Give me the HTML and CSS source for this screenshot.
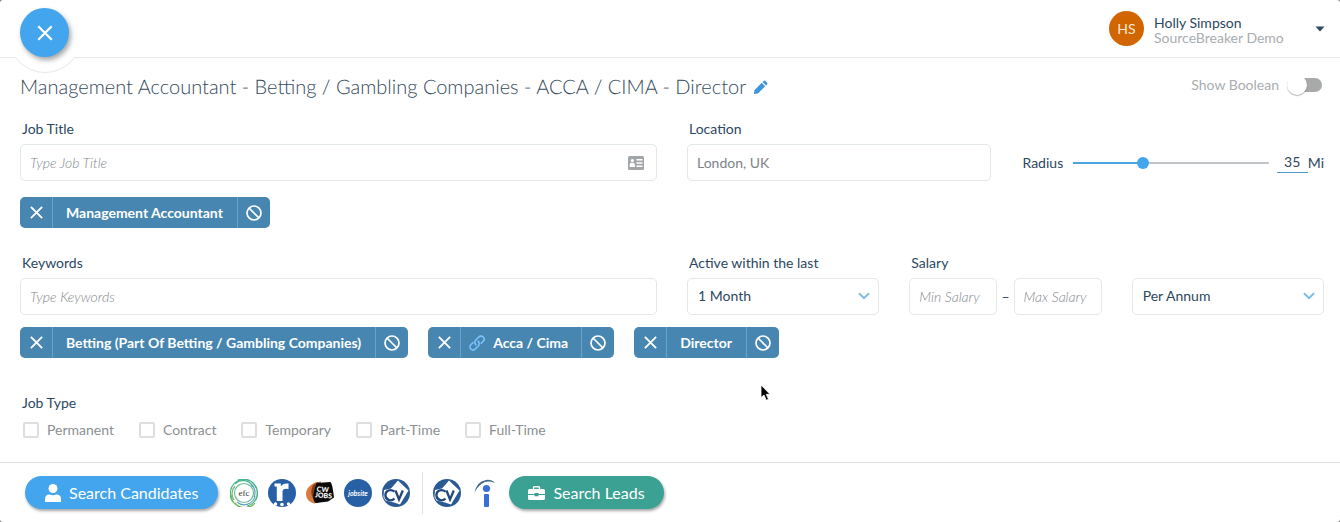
FILE: index.html
```
<!DOCTYPE html>
<html lang="en">
<head>
<meta charset="utf-8">
<title>SourceBreaker search</title>
<link rel="stylesheet" href="styles.css">
</head>
<body>
<svg class="defs" aria-hidden="true">
  <symbol id="x" viewBox="0 0 16 16"><path d="M2 2 14 14M14 2 2 14" fill="none" stroke="currentColor" stroke-width="2"/></symbol>
  <symbol id="ban" viewBox="0 0 16 16"><circle cx="8" cy="8" r="7" fill="none" stroke="currentColor" stroke-width="1.7"/><path d="M3 3 13 13" stroke="currentColor" stroke-width="1.7"/></symbol>
  <symbol id="cv" viewBox="0 0 28 28">
    <circle cx="14" cy="14" r="14" fill="#2a5a94"/>
    <path d="M16 1.500 26.500 11.500 18 25.500 12 23.500 3.500 21.500 1.500 18 2 11 9 9.500Z" fill="#fff"/>
    <path d="M12.500 12.600C8.500 9.400 3.200 11.600 3.400 16.400C3.600 21 8.800 22.800 12.500 19.700M13.500 11.500 17 20.500 20.800 11.500" fill="none" stroke="#23487c" stroke-width="2.300"/>
  </symbol>
</svg>
<div class="app">
  <header class="header">
    <span class="notch"></span>
    <button class="close" aria-label="Close"><svg class="close-icon"><use href="#x"/></svg></button>
    <button class="account">
      <span class="avatar">HS</span>
      <span class="who"><span>Holly Simpson</span><span class="org">SourceBreaker Demo</span></span>
      <svg class="caret" viewBox="0 0 10 6"><path d="M.5.5h9L5 5.500Z" fill="currentColor"/></svg>
    </button>
  </header>

  <main class="main">
    <div class="title-row">
      <h1 class="title">Management Accountant - Betting / Gambling Companies - ACCA / CIMA - Director</h1>
      <button class="plain" aria-label="Edit title"><svg class="pencil" viewBox="0 0 16 16"><path d="M1 15 1.500 10.800 9.300 3 13 6.700 5.200 14.500ZM10.200 2.100 11.600.8Q12.300.3 13 .9L15.100 3Q15.700 3.700 15.200 4.400L13.900 5.800Z" fill="#3f97da"/></svg></button>
      <label class="boolean">Show Boolean <input class="switch" type="checkbox" role="switch"></label>
    </div>

    <div class="columns">
      <section class="field">
        <label class="label" for="job">Job Title</label>
        <div class="with-icon">
          <input class="box" id="job" placeholder="Type Job Title">
          <svg class="card-icon" viewBox="0 0 16 14"><rect width="16" height="14" rx="1.500" fill="#a3a6a8"/><circle cx="4.300" cy="4.500" r="1.600" fill="#fff"/><path d="M1.700 11V8.800Q1.700 7.200 3.300 6.800H5.300Q6.900 7.200 6.900 8.800V11ZM8.500 3H14.500V4.500H8.500ZM8.500 6.200H14.500V7.700H8.500ZM8.500 9.400H14.500V11H8.500Z" fill="#fff"/></svg>
        </div>
      </section>
      <div class="halves">
        <section class="field">
          <label class="label" for="loc">Location</label>
          <input class="box" id="loc" value="London, UK">
        </section>
        <div class="radius">
          <label for="radius">Radius</label>
          <input class="range" id="radius" type="range" min="0" max="100" value="35">
          <span class="miles"><input class="num" aria-label="Radius in miles" value="35"><span>Mi</span></span>
        </div>
      </div>
    </div>

    <div class="chips chips-job">
      <div class="chip"><button class="chip-btn" aria-label="Remove"><svg class="chip-x"><use href="#x"/></svg></button><span class="chip-text">Management Accountant</span><button class="chip-btn" aria-label="Exclude"><svg class="chip-ban"><use href="#ban"/></svg></button></div>
    </div>

    <div class="columns">
      <section class="field">
        <label class="label" for="kw">Keywords</label>
        <input class="box" id="kw" placeholder="Type Keywords">
      </section>
      <div class="thirds">
        <section class="field">
          <label class="label" for="active">Active within the last</label>
          <div class="drop"><select class="box select" id="active"><option>1 Month</option></select><svg class="chevron" viewBox="0 0 12 8"><path d="M1 1.200 6 6.200 11 1.200" fill="none" stroke="#7dbbe8" stroke-width="2"/></svg></div>
        </section>
        <section class="field">
          <label class="label" for="min">Salary</label>
          <div class="salary"><input class="box" id="min" placeholder="Min Salary"><span>–</span><input class="box" aria-label="Maximum salary" placeholder="Max Salary"></div>
        </section>
        <section class="field">
          <div class="drop"><select class="box select" aria-label="Salary period"><option>Per Annum</option></select><svg class="chevron" viewBox="0 0 12 8"><path d="M1 1.200 6 6.200 11 1.200" fill="none" stroke="#7dbbe8" stroke-width="2"/></svg></div>
        </section>
      </div>
    </div>

    <div class="chips chips-kw">
      <div class="chip"><button class="chip-btn" aria-label="Remove"><svg class="chip-x"><use href="#x"/></svg></button><span class="chip-text">Betting (Part Of Betting / Gambling Companies)</span><button class="chip-btn" aria-label="Exclude"><svg class="chip-ban"><use href="#ban"/></svg></button></div>
      <div class="chip"><button class="chip-btn" aria-label="Remove"><svg class="chip-x"><use href="#x"/></svg></button><span class="chip-text linked"><svg class="link" viewBox="0 0 16 16"><g fill="none" stroke="#7cc4fb" stroke-width="1.600" stroke-linecap="round"><path d="M6.800 9.600C5.400 8.200 5.500 6.300 6.800 5L9.500 2.200C10.900.8 13 .8 14.200 2C15.400 3.200 15.300 5.200 14 6.500L12.200 8.300"/><path d="M9.200 6.400C10.600 7.800 10.500 9.700 9.200 11L6.500 13.800C5.100 15.200 3 15.200 1.800 14C.6 12.800.7 10.800 2 9.500L3.800 7.700"/></g></svg>Acca / Cima</span><button class="chip-btn" aria-label="Exclude"><svg class="chip-ban"><use href="#ban"/></svg></button></div>
      <div class="chip"><button class="chip-btn" aria-label="Remove"><svg class="chip-x"><use href="#x"/></svg></button><span class="chip-text">Director</span><button class="chip-btn" aria-label="Exclude"><svg class="chip-ban"><use href="#ban"/></svg></button></div>
    </div>

    <fieldset class="types">
      <legend class="label">Job Type</legend>
      <div class="checks">
        <label class="check"><input type="checkbox" class="tick">Permanent</label>
        <label class="check"><input type="checkbox" class="tick">Contract</label>
        <label class="check"><input type="checkbox" class="tick">Temporary</label>
        <label class="check"><input type="checkbox" class="tick">Part-Time</label>
        <label class="check"><input type="checkbox" class="tick">Full-Time</label>
      </div>
    </fieldset>
  </main>

  <footer class="footer">
    <button class="pill blue"><svg class="person" viewBox="0 0 16 18"><circle cx="8" cy="4.500" r="4.500" fill="#fff"/><path d="M0 18V15Q0 10.500 4.500 10.500Q8 11.800 11.500 10.500Q16 10.500 16 15V18Z" fill="#fff"/></svg>Search Candidates</button>
    <div class="logos">
      <svg class="logo" viewBox="0 0 28 28">
        <g fill="none" stroke-width="1.200">
          <path d="M2 20A13.300 13.300 0 0 1 20 2M3 23A13 13 0 0 1 2 8M8 1A13.500 13.500 0 0 1 26 9" stroke="#4ab59a"/>
          <path d="M24 5A13.400 13.400 0 0 1 25 22M27 12A13 13 0 0 1 17 27M5 5A11 11 0 0 1 23 8" stroke="#49b58b"/>
          <path d="M25 24A13 13 0 0 1 5 24M20 27A13 13 0 0 1 1 16M4 21A11.500 11.500 0 0 1 5 7" stroke="#77b95c"/>
          <path d="M7 23A11 11 0 0 0 25 17M21 5A11 11 0 0 1 24 18" stroke="#609dbd"/>
          <circle cx="14" cy="14" r="9.500" stroke="#70bd9b"/>
        </g>
        <text x="14" y="17" text-anchor="middle" class="efc">efc</text>
      </svg>
      <svg class="logo" viewBox="0 0 28 28"><circle cx="14" cy="14" r="14" fill="#2860a5"/><path d="M6.500 4.500H12.800V7.300Q15 3.800 20.500 4.500V10Q14.500 8.800 14.500 13V22H8.800V7.500H6.500Z" fill="#fff"/><circle cx="7.500" cy="25" r="1.700" fill="#fff"/><circle cx="14" cy="25.500" r="1.800" fill="#fff"/><circle cx="20.500" cy="25" r="1.700" fill="#fff"/></svg>
      <svg class="logo" viewBox="0 0 28 28"><path d="M9 3.500 15 2.500 14 23 8 24.500Q0 22 0 15T9 3.500Z" fill="#d77a3d"/><path d="M7 6 12 3 12 24 8 21Q3 14 7 6Z" fill="#843c18"/><path d="M10.500 4 24.500 3Q26.500 5 28 18.500L22 22.500 10 24Q6 22 8 12Z" fill="#090909"/><text class="cw" transform="rotate(4 18 14)"><tspan x="10.500" y="13">CW</tspan><tspan x="9" y="19">JOBS</tspan></text></svg>
      <svg class="logo" viewBox="0 0 28 28"><circle cx="14" cy="14" r="14" fill="#2860a5"/><text x="14" y="17" text-anchor="middle" class="jobsite">jobsite</text></svg>
      <svg class="logo"><use href="#cv"/></svg>
    </div>
    <div class="logos leads">
      <svg class="logo"><use href="#cv"/></svg>
      <svg class="logo" viewBox="0 0 28 28"><path d="M3.500 14Q5 3 15 1Q20.500.2 24 4Q16 .8 11 4.500Q6 8 3.500 14Z" fill="#416989"/><circle cx="15.500" cy="9.500" r="3.600" fill="#386fd5"/><rect x="13" y="15" width="5" height="13" rx="1" fill="#386fd5"/></svg>
    </div>
    <button class="pill green"><svg class="case" viewBox="0 0 17 14"><path d="M5.500 3V1.500Q5.500.7 6.300.7H10.700Q11.500.7 11.500 1.500V3" fill="none" stroke="#fff" stroke-width="1.400"/><path d="M1.500 3H15.500Q17 3 17 4.500V8H10.500V7H6.500V8H0V4.500Q0 3 1.500 3ZM0 9H6.500V10.200H10.500V9H17V12.500Q17 14 15.500 14H1.500Q0 14 0 12.500Z" fill="#fff"/></svg>Search Leads</button>
  </footer>
  <svg class="cursor" viewBox="0 0 12 18"><path d="M1 1V13.500L4 11 6.300 16.300 8.500 15.300 6.300 10.300H10Z" fill="#000" stroke="#fff" stroke-width=".8"/></svg>
</div>
</body>
</html>
```
FILE: styles.css
```
* { box-sizing: border-box; }
html { background: #777; }
body { margin: 0; font: 14px/20px Lato, "Open Sans", sans-serif; color: #2b4860; }
button, input, select { font: inherit; color: inherit; }
button { padding: 0; border: 0; background: none; cursor: pointer; }
svg { display: block; flex: none; }
.defs { position: absolute; width: 0; height: 0; }
.app { position: relative; display: flex; flex-direction: column; min-height: 100vh; background: #fff; border-radius: 3px; }

.header { position: relative; display: flex; justify-content: space-between; align-items: center; height: 58px; padding: 0 15px 0 20px; border-bottom: 1px solid #e4e8ea; }
.notch { position: absolute; left: 8px; top: -1px; width: 74px; height: 74px; border: 1px solid #e4e8ea; border-radius: 50%; background: #fff; clip-path: inset(58px 0 0 0); }
.close { position: relative; display: grid; place-items: center; width: 49px; height: 49px; margin-top: 8px; border-radius: 50%; background: #43a5ee; color: #fff; box-shadow: 2px 3px 5px rgba(0, 0, 0, .35); }
.close-icon { width: 18px; height: 18px; }
.account { display: flex; align-items: center; text-align: left; }
.avatar { display: grid; place-items: center; width: 35px; height: 35px; margin-right: 10px; border-radius: 50%; background: #d16600; color: #fbe9d8; }
.who { display: flex; flex-direction: column; width: 161px; line-height: 15px; padding-top: 3px; }
.org { color: #a9adb0; }
.caret { width: 10px; height: 6px; }

.main { flex: 1; padding: 15px 16px 0 20px; }
.title-row { display: flex; align-items: center; height: 28px; margin-bottom: 18px; }
.title { margin: 0 7px 0 0; font-size: 20px; line-height: 28px; font-weight: 300; color: #34495a; text-rendering: geometricPrecision; }
.pencil { width: 15px; height: 15px; }
.boolean { display: flex; align-items: center; align-self: flex-start; gap: 8px; margin: 2px 0 0 auto; color: #a9adb0; }
.switch { appearance: none; display: flex; align-items: center; width: 35px; height: 14px; margin: 0 2px 0 0; border-radius: 7px; background: linear-gradient(90deg, transparent 10px, #a8a9a9 10px); }
.switch::before { content: ""; width: 20px; height: 20px; border-radius: 50%; background: #fff; box-shadow: 0 1px 1px rgba(0, 0, 0, .3); }

.columns { display: grid; grid-template-columns: 1fr 1fr; gap: 30px; }
.halves { display: grid; grid-template-columns: 1fr 1fr; gap: 30px; align-items: end; }
.thirds { display: grid; grid-template-columns: repeat(3, 1fr); gap: 30px; align-items: end; }
.field { min-width: 0; }
.label { display: block; padding: 0 2px; margin-bottom: 5px; }
.box { display: block; width: 100%; min-width: 0; height: 37px; padding: 0 9px; border: 1px solid #e2e7ea; border-radius: 5px; background: #fff; outline: 0; color: #7d8488; }
.box::placeholder { color: #7f868b; font-style: italic; font-weight: 300; opacity: 1; }
.with-icon, .drop { position: relative; }
.card-icon { position: absolute; right: 13px; top: 12px; width: 16px; height: 14px; }
.select { appearance: none; padding: 0 10px 2px; color: #2b4860; }
.chevron { position: absolute; right: 9px; top: 14px; width: 12px; height: 8px; pointer-events: none; }
.salary { display: flex; align-items: center; gap: 4px; }
.radius { display: flex; align-items: center; height: 37px; padding-left: 2px; gap: 8px; }
.range { appearance: none; flex: 1; min-width: 0; height: 12px; margin: 0 0 0 2px; background: linear-gradient(90deg, #4aa5e2 35%, #c1c4c6 35%) center / 100% 2px no-repeat; }
.range::-webkit-slider-thumb { appearance: none; width: 12px; height: 12px; border-radius: 50%; background: #43a5ee; }
.miles { display: flex; align-items: center; }
.num { width: 31px; height: 20px; padding: 0; border: 0; border-bottom: 1px solid #4f9cc5; text-align: center; background: none; }

.chips { display: flex; flex-wrap: wrap; gap: 20px; }
.chips-job { margin: 16px 0 25px; }
.chips-kw { margin: 12px 0 35px; }
.chip { display: flex; height: 31px; border-radius: 5px; background: #4686b1; color: #fff; }
.chip-btn { display: grid; place-items: center; width: 32px; }
.chip-x { width: 15px; height: 15px; }
.chip-ban { width: 16px; height: 16px; }
.chip-text { display: flex; align-items: center; padding: 0 14px 0 13px; border: solid #6ba2c7; border-width: 0 1px; font-weight: 700; }
.linked { gap: 8px; padding: 0 13px 0 8px; }
.link { width: 16px; height: 16px; }

.types { margin: 0; padding: 0; border: 0; }
.types .label { margin-bottom: 7px; }
.checks { display: flex; flex-wrap: wrap; gap: 25px; padding-left: 3px; color: #8b9093; }
.check { display: flex; align-items: center; gap: 8px; }
.tick { appearance: none; width: 16px; height: 16px; margin: 0; border: 2px solid #dcdedf; border-radius: 2px; background: #fff; }

.footer { display: flex; align-items: center; height: 60px; padding: 0 25px; border-top: 1px solid #dfe2e4; }
.pill { display: flex; align-items: center; height: 33px; padding: 0 20px; border-radius: 17px; color: #fff; font-size: 16px; box-shadow: 1px 2px 3px rgba(0, 0, 0, .35); }
.blue { background: #43a5ee; gap: 8px; }
.green { background: #3aa193; gap: 8px; padding: 0 19px; }
.person { width: 16px; height: 18px; }
.case { width: 17px; height: 14px; }
.logos { display: flex; gap: 10px; padding: 0 12px; }
.logo { width: 28px; height: 28px; }
.leads { align-items: center; height: 42px; padding: 0 10px; border-left: 1px solid #dfe2e4; }
.efc { font: 9px "Liberation Serif", serif; fill: #333; }
.cw { font: 900 7px Lato, sans-serif; fill: #fff; }
.jobsite { font: italic 700 7px Lato, sans-serif; fill: #fff; }
.cursor { position: absolute; left: 760px; top: 384px; width: 12px; height: 18px; }
```
